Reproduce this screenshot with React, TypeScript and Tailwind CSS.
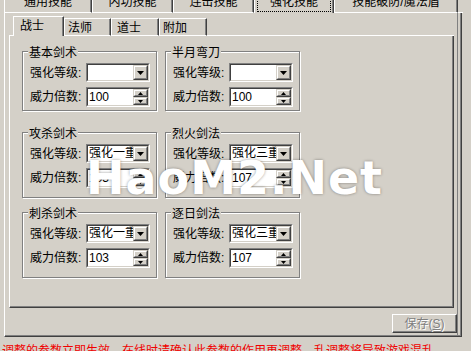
import React from 'react';

const Tri = ({ up = false }: { up?: boolean }) => (
  <svg width="7" height="4" viewBox="0 0 7 4" className="block">
    <polygon points={up ? '3.5,0 7,4 0,4' : '0,0 7,0 3.5,4'} fill="#000" />
  </svg>
);

const SmallTri = ({ up = false }: { up?: boolean }) => (
  <svg width="5" height="3" viewBox="0 0 5 3" className="block">
    <polygon points={up ? '2.5,0 5,3 0,3' : '0,0 5,0 2.5,3'} fill="#000" />
  </svg>
);

// raised 3d face (buttons inside combo/spin)
function Raised({ children, className = '' }: { children?: React.ReactNode; className?: string }) {
  return (
    <div className={`border border-t-[#d4d0c8] border-l-[#d4d0c8] border-r-[#404040] border-b-[#404040] ${className}`}>
      <div className="flex h-full w-full items-center justify-center border border-t-white border-l-white border-r-[#808080] border-b-[#808080] bg-[#d4d0c8]">
        {children}
      </div>
    </div>
  );
}

function Sunken({ children, className = '' }: { children?: React.ReactNode; className?: string }) {
  return (
    <div className={`border border-t-[#808080] border-l-[#808080] border-r-white border-b-white ${className}`}>
      <div className="flex h-full w-full border border-t-[#404040] border-l-[#404040] border-r-[#d4d0c8] border-b-[#d4d0c8] bg-white">
        {children}
      </div>
    </div>
  );
}

function Combo({ value }: { value: string }) {
  return (
    <Sunken className="h-[19px] w-[64px]">
      <div className="flex-1 overflow-hidden whitespace-nowrap pl-[1px] leading-[15px]">{value}</div>
      <Raised className="h-[15px] w-[15px] shrink-0">
        <Tri />
      </Raised>
    </Sunken>
  );
}

function Spin({ value }: { value: string }) {
  return (
    <Sunken className="h-[20px] w-[64px]">
      <div className="flex-1 pl-[1px] leading-[16px]">{value}</div>
      <div className="flex w-[15px] shrink-0 flex-col">
        <Raised className="h-[8px] w-[15px]">
          <SmallTri up />
        </Raised>
        <Raised className="h-[8px] w-[15px]">
          <SmallTri />
        </Raised>
      </div>
    </Sunken>
  );
}

type Skill = { title: string; level: string; power: string };

function GroupBox({ skill, height }: { skill: Skill; height: string }) {
  return (
    <div className={`relative w-[135px] ${height} border border-[#808080] shadow-[inset_1px_1px_0_#fff,1px_1px_0_#fff] pt-[11px] pl-[7px]`}>
      <span className="absolute -top-[5px] left-[5px] bg-[#d4d0c8] px-[1px] leading-[12px]">{skill.title}</span>
      <div className="flex items-center">
        <span className="w-[56px] leading-[12px]">强化等级:</span>
        <Combo value={skill.level} />
      </div>
      <div className="mt-[5px] flex items-center">
        <span className="w-[56px] leading-[12px]">威力倍数:</span>
        <Spin value={skill.power} />
      </div>
    </div>
  );
}

const rows: { left: Skill; right: Skill; height: string; mt: string }[] = [
  {
    left: { title: '基本剑术', level: '', power: '100' },
    right: { title: '半月弯刀', level: '', power: '100' },
    height: 'h-[60px]',
    mt: 'mt-[15px]',
  },
  {
    left: { title: '攻杀剑术', level: '强化一重', power: '103' },
    right: { title: '烈火剑法', level: '强化三重', power: '107' },
    height: 'h-[66px]',
    mt: 'mt-[21px]',
  },
  {
    left: { title: '刺杀剑术', level: '强化一重', power: '103' },
    right: { title: '逐日剑法', level: '强化三重', power: '107' },
    height: 'h-[66px]',
    mt: 'mt-[14px]',
  },
];

const outerTabs = [
  { label: '通用技能', w: 'w-[88px]' },
  { label: '内功技能', w: 'w-[81px]' },
  { label: '连击技能', w: 'w-[81px]' },
  { label: '强化技能', w: 'w-[80px]', active: true },
  { label: '技能破防/魔法盾', w: 'w-[124px]' },
];

const innerTabs = [
  { label: '战士', w: 'w-[51px]', pl: 'pl-[6px]', active: true },
  { label: '法师', w: 'w-[47px]', pl: 'pl-[3px]' },
  { label: '道士', w: 'w-[48px]', pl: 'pl-[5px]' },
  { label: '附加', w: 'w-[48px]', pl: 'pl-[3px]' },
];

export default function App() {
  return (
    <div className="relative h-[351px] w-[471px] overflow-hidden bg-[#d4d0c8] font-['Liberation_Sans','Noto_Sans_CJK_SC',sans-serif] text-[12px] leading-[12px] text-black">
      {/* outer tab strip, cut off at the top */}
      <div className="flex h-[13px]">
        <div className="w-[4px] shrink-0" />
        {outerTabs.map((t) =>
          t.active ? (
            <div key={t.label} className={`${t.w} -mt-[8px] h-[21px] shrink-0 border-l border-white border-r border-r-[#404040] shadow-[inset_-1px_0_0_#808080] px-[2px] pb-[1px]`}>
              <div className="flex h-full items-center justify-center border border-dotted border-black leading-[12px]">{t.label}</div>
            </div>
          ) : (
            <div key={t.label} className={`${t.w} -mt-[8px] flex h-[21px] shrink-0 items-center justify-center border-l border-white border-r border-r-[#404040] border-b border-b-white shadow-[inset_-1px_0_0_#808080]`}>
              {t.label}
            </div>
          )
        )}
        <div className="w-[5px] border-b border-white" />
      </div>

      {/* outer panel */}
      <div className="ml-[4px] flex h-[324px] w-[458px] border-l border-white border-r border-r-[#404040] border-b border-b-[#404040] shadow-[inset_-1px_-1px_0_#808080]">
        <div className="flex w-[453px] flex-col border-r border-[#808080]">
          <div className="ml-[4px] mt-[3px] w-[445px]">
            {/* inner tabs */}
            <div className="flex h-[20px] items-end">
              <div className="h-[1px] w-[4px] shrink-0 bg-white" />
              {innerTabs.map((t) =>
                t.active ? (
                  <div key={t.label} className={`${t.w} ${t.pl} flex h-[20px] shrink-0 items-center border-l border-t border-white border-r border-r-[#404040] shadow-[inset_-1px_0_0_#808080] pb-[1px]`}>
                    {t.label}
                  </div>
                ) : (
                  <div key={t.label} className={`${t.w} ${t.pl} flex h-[18px] shrink-0 items-center border-l border-t border-white border-r border-r-[#404040] border-b border-b-white shadow-[inset_-1px_0_0_#808080] pt-[2px]`}>
                    {t.label}
                  </div>
                )
              )}
              <div className="h-[1px] flex-1 bg-white" />
            </div>
            {/* inner panel */}
            <div className="flex h-[272px] flex-col border-l border-white border-r border-r-[#404040] border-b border-b-[#404040] shadow-[inset_-1px_-1px_0_#808080]">
              {rows.map((r, i) => (
                <div key={i} className={`flex gap-[8px] pl-[12px] ${r.mt}`}>
                  <GroupBox skill={r.left} height={r.height} />
                  <GroupBox skill={r.right} height={r.height} />
                </div>
              ))}
            </div>
          </div>
          <div className="mt-[6px] flex justify-end">
            <button disabled className="h-[19px] w-[65px] border border-t-white border-l-white border-r-[#404040] border-b-[#404040] shadow-[inset_-1px_-1px_0_#808080] text-[#808080] [text-shadow:1px_1px_0_#fff]">
              保存(<span className="underline">S</span>)
            </button>
          </div>
        </div>
      </div>

      <div className="mt-[8px] whitespace-nowrap pl-[2px] text-[#f00000]">
        调整的参数立即生效，在线时请确认此参数的作用再调整，乱调整将导致游戏混乱
      </div>

      {/* watermark over the form */}
      <div className="pointer-events-none absolute left-[86px] top-[152px] font-['DejaVu_Sans',sans-serif] text-[46px] font-bold leading-[52px] tracking-[1px] text-white [text-shadow:0_0_3px_rgba(0,0,0,0.4)]">
        HaoM2.Net
      </div>
    </div>
  );
}
